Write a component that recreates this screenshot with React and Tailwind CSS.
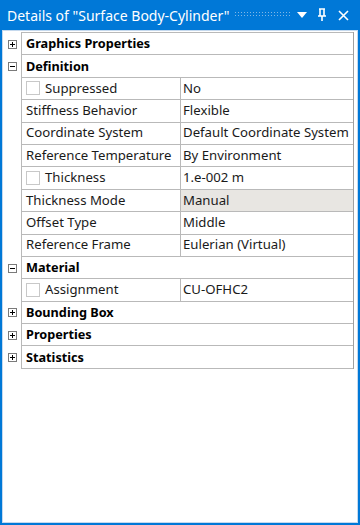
import React from 'react';

const font = { fontFamily: '"Noto Sans", "Liberation Sans", sans-serif' };

const rows = [
  { type: 'group', label: 'Graphics Properties', open: false },
  { type: 'group', label: 'Definition', open: true },
  { label: 'Suppressed', value: 'No', check: true },
  { label: 'Stiffness Behavior', value: 'Flexible' },
  { label: 'Coordinate System', value: 'Default Coordinate System' },
  { label: 'Reference Temperature', value: 'By Environment' },
  { label: 'Thickness', value: '1.e-002 m', check: true },
  { label: 'Thickness Mode', value: 'Manual', shaded: true },
  { label: 'Offset Type', value: 'Middle' },
  { label: 'Reference Frame', value: 'Eulerian (Virtual)' },
  { type: 'group', label: 'Material', open: true },
  { label: 'Assignment', value: 'CU-OFHC2', check: true },
  { type: 'group', label: 'Bounding Box', open: false },
  { type: 'group', label: 'Properties', open: false },
  { type: 'group', label: 'Statistics', open: false },
];

const Toggle = ({ open }) => (
  <div className="w-[9px] h-[9px] border border-[#7a7a7a] bg-white flex items-center justify-center">
    <svg width="7" height="7" viewBox="0 0 7 7">
      <rect x="1" y="3" width="5" height="1" fill="#000" />
      {!open && <rect x="3" y="1" width="1" height="5" fill="#000" />}
    </svg>
  </div>
);

const Row = ({ row }) => {
  if (row.type === 'group') {
    return (
      <div className="flex h-[22.4px]">
        <div className="w-[18px] flex items-center justify-center pl-[1px] bg-white">
          <Toggle open={row.open} />
        </div>
        <div className="flex-1 flex items-center pl-[4px] border-l border-b border-[#b9b9b9] font-bold text-[12.7px] text-[#000]">
          {row.label}
        </div>
      </div>
    );
  }
  return (
    <div className="flex h-[22.4px]">
      <div className="w-[18px]" />
      <div className="w-[160px] flex items-center pl-[4px] border-l border-b border-r border-[#b9b9b9] text-[13.2px] text-[#1a1a1a] whitespace-nowrap overflow-hidden">
        {row.check && (
          <span className="w-[14px] h-[14px] border border-[#c8c8c8] bg-white mr-[5px] shrink-0" />
        )}
        {row.label}
      </div>
      <div
        className={`flex-1 flex items-center pl-[2px] border-b border-[#b9b9b9] text-[13.2px] text-[#1a1a1a] whitespace-nowrap overflow-hidden ${
          row.shaded ? 'bg-[#e8e6e2]' : 'bg-white'
        }`}
      >
        {row.value}
      </div>
    </div>
  );
};

export default function App() {
  return (
    <div className="w-[360px] h-[525px] bg-[#0078d7] p-[2px] pt-0 flex flex-col" style={font}>
      <div className="h-[30px] flex items-center pl-[5px] pr-[9px] text-white text-[14px]">
        <span className="whitespace-nowrap">Details of "Surface Body-Cylinder"</span>
        <svg className="flex-1 h-[6px] mx-[5px]" height="6">
          <defs>
            <pattern id="grip" width="3" height="3" patternUnits="userSpaceOnUse">
              <rect x="0" y="0" width="1" height="1" fill="#7fb6e6" />
            </pattern>
          </defs>
          <rect width="100%" height="6" fill="url(#grip)" />
        </svg>
        <svg width="12" height="8" viewBox="0 0 12 8" className="mr-[9px]">
          <path d="M1 1 L11 1 L6 7 Z" fill="#fff" />
        </svg>
        <svg width="10" height="14" viewBox="0 0 10 14" className="mr-[11px]">
          <path d="M2 1 H8 M3 1 V8 M7 1 V8 M1 8 H9 M5 8 V13" stroke="#fff" strokeWidth="1.6" fill="none" />
        </svg>
        <svg width="11" height="11" viewBox="0 0 11 11">
          <path d="M1 1 L10 10 M10 1 L1 10" stroke="#fff" strokeWidth="1.6" />
        </svg>
      </div>
      <div className="flex-1 bg-white border border-[#c5d9ee] pt-[1px] pr-[3px]">
        <div className="border-r border-[#a0a0a0]">
          <div className="border-t border-[#b9b9b9] ml-[18px]" />
          {rows.map((r, i) => (
            <Row key={i} row={r} />
          ))}
        </div>
      </div>
    </div>
  );
}
